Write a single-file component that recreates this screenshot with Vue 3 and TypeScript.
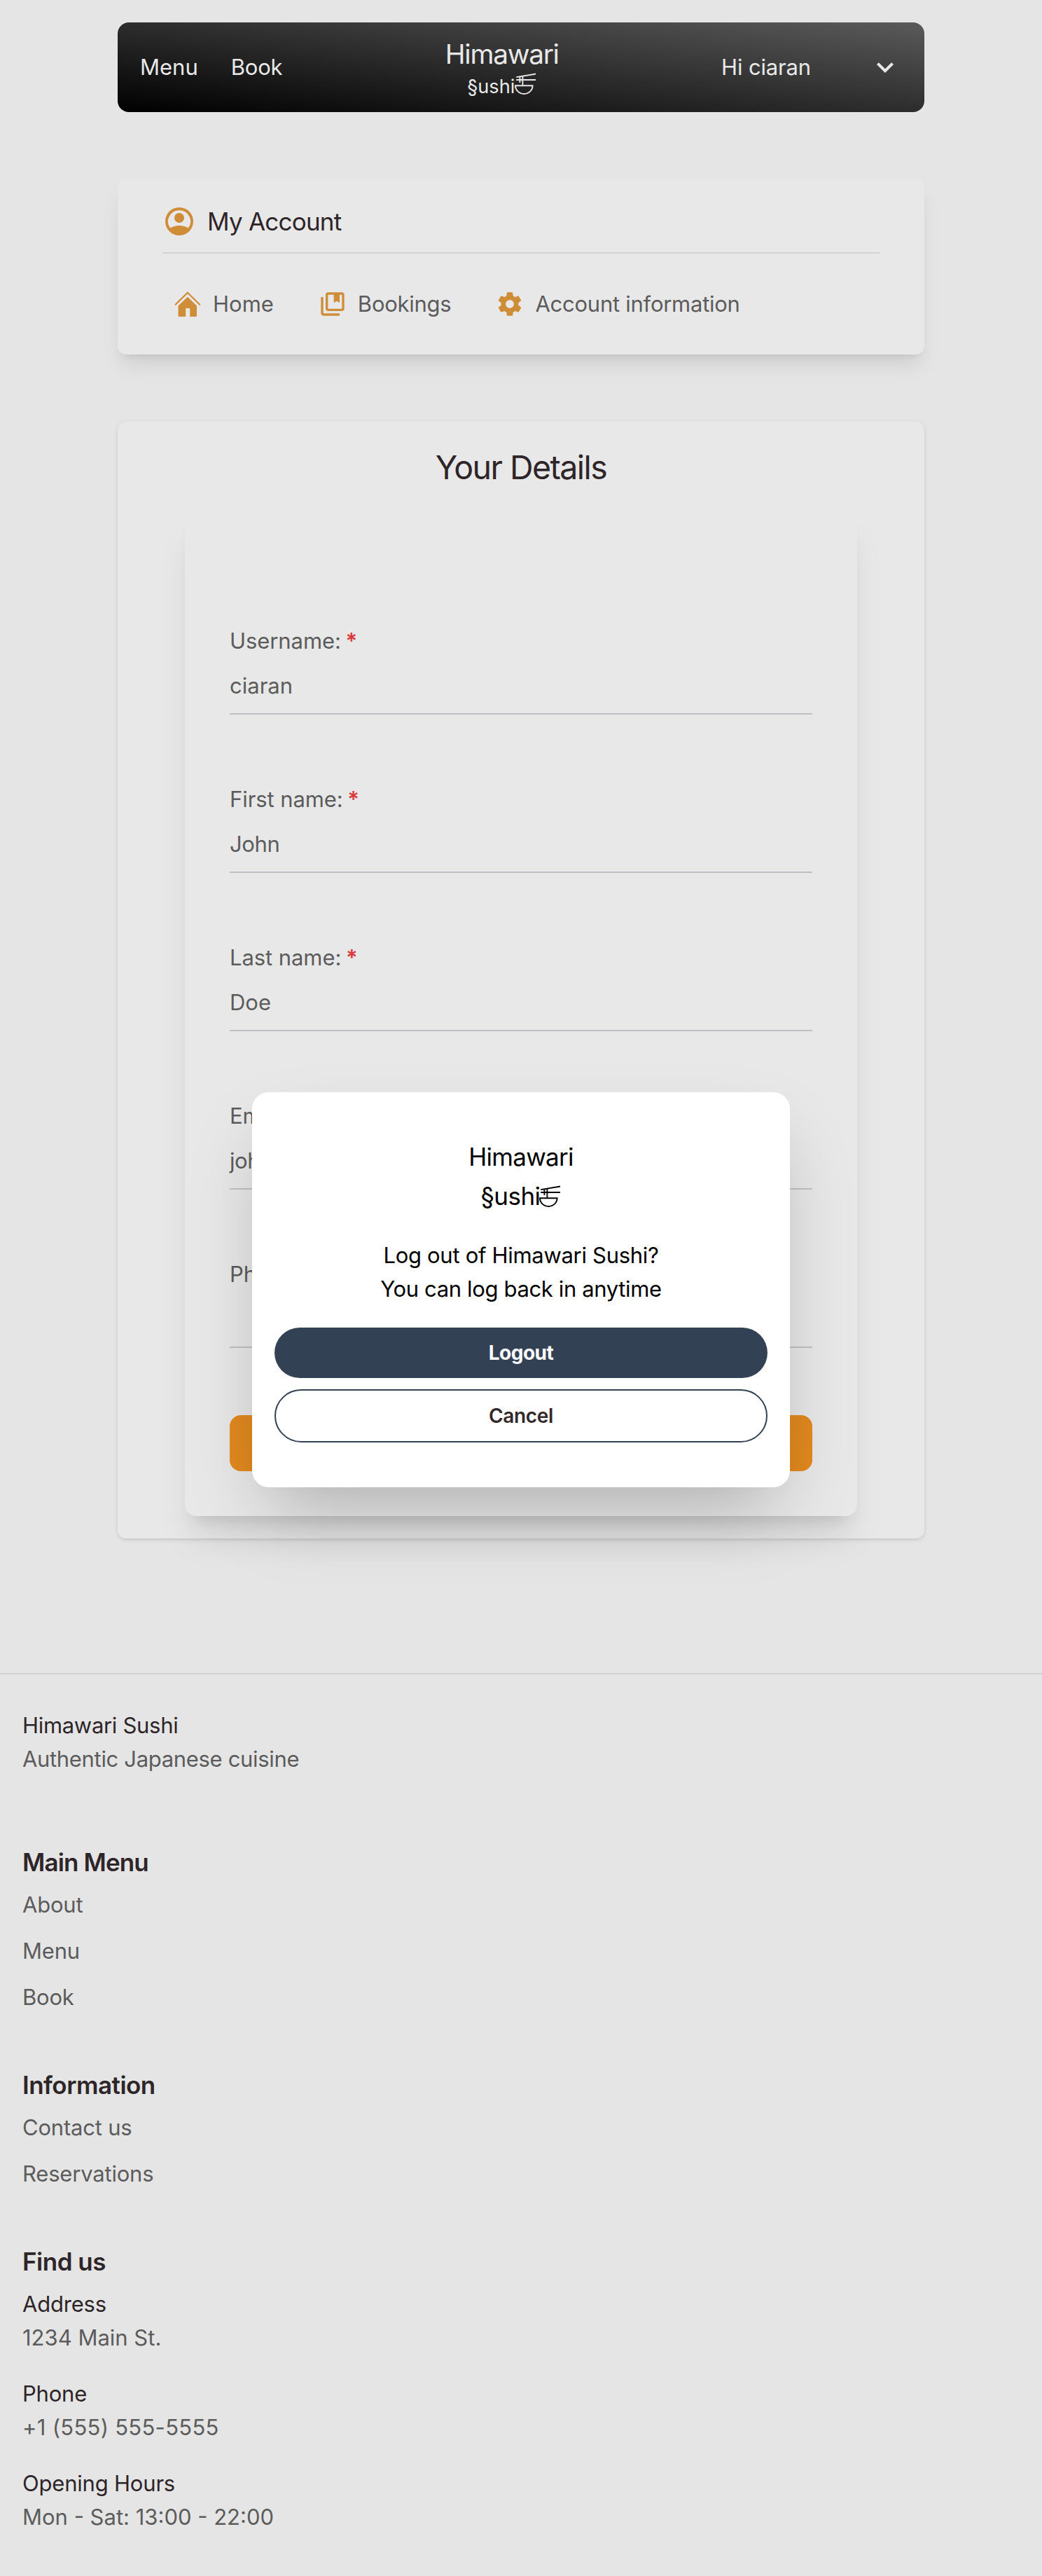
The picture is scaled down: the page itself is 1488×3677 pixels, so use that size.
<script setup lang="ts">
import { ref } from 'vue'

interface Field {
  id: string
  label: string
  value: string
}

const fields = ref<Field[]>([
  { id: 'username', label: 'Username:', value: 'ciaran' },
  { id: 'first-name', label: 'First name:', value: 'John' },
  { id: 'last-name', label: 'Last name:', value: 'Doe' },
  { id: 'email', label: 'Email:', value: 'johndoe@gmail.com' },
  { id: 'phone', label: 'Phone:', value: '' },
])

const mainMenu: string[] = ['About', 'Menu', 'Book']
const information: string[] = ['Contact us', 'Reservations']
const contact: { term: string; detail: string; kind: string }[] = [
  { term: 'Address', detail: '1234 Main St.', kind: 'digits' },
  { term: 'Phone', detail: '+1 (555) 555-5555', kind: 'phone' },
  { term: 'Opening Hours', detail: 'Mon - Sat: 13:00 - 22:00', kind: 'digits' },
]

const modalOpen = ref(true)
</script>

<template>
  <div class="page">
    <header class="topbar">
      <nav class="topnav">
        <a class="plain">Menu</a>
        <a>Book</a>
      </nav>
      <div class="brand">
        <span class="brand-name">Himawari</span>
        <span class="brand-sub">
          <span>§ushi</span>
          <svg class="bowl" viewBox="0 0 32 32" width="32" height="32">
            <path d="M3.2 6.1 31 1.5M3.2 10H31M8.4 5v9M12.4 4.4v13.4" />
            <path d="M2 18.3H26.6C26.6 25 21 30 14.3 30S2 25 2 18.3z" />
          </svg>
        </span>
      </div>
      <div class="user">
        <span>Hi ciaran</span>
        <svg viewBox="0 0 24 24" width="48" height="48" fill="currentColor">
          <path d="M16.59 8.59 12 13.17 7.41 8.59 6 10l6 6 6-6z" />
        </svg>
      </div>
    </header>

    <section class="account">
      <h2 class="account-title">
        <svg viewBox="0 0 24 24" width="48" height="48">
          <path
            fill-rule="evenodd"
            d="M12 2a10 10 0 1 0 0 20 10 10 0 0 0 0-20zm0 2.1a7.9 7.9 0 0 0-6.4 12.7C7.4 15.6 9.6 15 12 15s4.6.6 6.4 1.8A7.9 7.9 0 0 0 12 4.1z"
          />
          <circle cx="12" cy="9.5" r="3.5" />
        </svg>
        <span>My Account</span>
      </h2>
      <nav class="account-nav">
        <a>
          <svg viewBox="0 0 40 40" width="40" height="40">
            <path d="M2.6 20.7 19.9 3.7 37.2 20.7" class="roof" />
            <path
              d="M19.9 9.7 33 22.5V36.5q0 1.500-1.500 1.500H23.2V26.8q0-.8-.8-.8H18q-.8 0-.8.8V38H8q-1.500 0-1.500-1.500V22.5z"
            />
          </svg>
          <span class="plain">Home</span>
        </a>
        <a>
          <svg viewBox="0 0 24 24" width="40" height="40">
            <path d="M4 6H2v14c0 1.1.9 2 2 2h14v-2H4V6z" />
            <path
              fill-rule="evenodd"
              d="M20 2H8c-1.1 0-2 .9-2 2v12c0 1.1.9 2 2 2h12c1.1 0 2-.9 2-2V4c0-1.1-.9-2-2-2zm0 14H8V4h5v7l2.5-1.5L18 11V4h2v12z"
            />
          </svg>
          <span>Bookings</span>
        </a>
        <a>
          <svg viewBox="0 0 24 24" width="40" height="40">
            <path
              d="M19.43 12.98c.04-.32.07-.64.07-.98s-.03-.66-.07-.98l2.11-1.65c.19-.15.24-.42.12-.64l-2-3.46c-.12-.22-.39-.3-.61-.22l-2.49 1c-.52-.4-1.08-.73-1.69-.98l-.38-2.65C14.46 2.18 14.25 2 14 2h-4c-.25 0-.46.18-.49.42l-.38 2.65c-.61.25-1.17.59-1.69.98l-2.49-1c-.23-.09-.49 0-.61.22l-2 3.46c-.13.22-.07.49.12.64l2.11 1.65c-.04.32-.07.65-.07.98s.03.66.07.98l-2.11 1.65c-.19.15-.24.42-.12.64l2 3.46c.12.22.39.3.61.22l2.49-1c.52.4 1.08.73 1.69.98l.38 2.65c.03.24.24.42.49.42h4c.25 0 .46-.18.49-.42l.38-2.65c.61-.25 1.17-.59 1.69-.98l2.49 1c.23.09.49 0 .61-.22l2-3.46c.12-.22.07-.49-.12-.64l-2.11-1.65zM12 15.5c-1.93 0-3.5-1.57-3.5-3.5s1.57-3.5 3.5-3.5 3.5 1.57 3.5 3.5-1.57 3.5-3.5 3.5z"
            />
          </svg>
          <span>Account information</span>
        </a>
      </nav>
    </section>

    <section class="details">
      <h1>Your Details</h1>
      <form class="form" @submit.prevent>
        <div v-for="field in fields" :key="field.id" class="field">
          <div class="label">{{ field.label }} <b v-if="field.id !== 'phone'">*</b></div>
          <div class="value" :class="field.id">{{ field.value }}</div>
        </div>
        <button class="save" type="submit" aria-label="Update"></button>
      </form>
    </section>

    <footer class="footer">
      <div class="about">
        <p class="strong">Himawari Sushi</p>
        <p class="tight">Authentic Japanese cuisine</p>
      </div>
      <div class="group menu-group">
        <h3 class="h-menu">Main Menu</h3>
        <ul>
          <li v-for="item in mainMenu" :key="item">{{ item }}</li>
        </ul>
      </div>
      <div class="group info-group">
        <h3>Information</h3>
        <ul>
          <li v-for="item in information" :key="item">{{ item }}</li>
        </ul>
      </div>
      <div class="group find-group">
        <h3>Find us</h3>
        <dl>
          <div v-for="row in contact" :key="row.term">
            <dt>{{ row.term }}</dt>
            <dd :class="row.kind">{{ row.detail }}</dd>
          </div>
        </dl>
      </div>
    </footer>

    <div v-if="modalOpen" class="overlay">
      <div class="modal" role="dialog" aria-modal="true">
        <div class="modal-name">Himawari</div>
        <div class="modal-sub">
          <span>§ushi</span>
          <svg class="bowl" viewBox="0 0 32 32" width="32" height="32">
            <path d="M3.2 6.1 31 1.5M3.2 10H31M8.4 5v9M12.4 4.4v13.4" />
            <path d="M2 18.3H26.6C26.6 25 21 30 14.3 30S2 25 2 18.3z" />
          </svg>
        </div>
        <p class="modal-text">
          Log out of Himawari Sushi?<br /><span>You can log back in anytime</span>
        </p>
        <button class="btn logout" type="button">Logout</button>
        <button class="btn cancel" type="button" @click="modalOpen = false">Cancel</button>
      </div>
    </div>
  </div>
</template>

<style>
html,
body {
  margin: 0;
  background: #e5e5e5;
}
</style>

<style scoped>
.page {
  position: relative;
  box-sizing: border-box;
  width: 100%;
  height: 3677px;
  padding-top: 32px;
  overflow: hidden;
  background: #e5e5e5;
  color: #5c5c5c;
  font-family: Inter, "Liberation Sans", sans-serif;
  font-size: 31px;
  line-height: 48px;
  letter-spacing: -0.2px;
}

h1,
h2,
h3,
p,
ul,
dl,
dd {
  margin: 0;
  padding: 0;
  font-weight: 400;
}

ul {
  list-style: none;
}

.topbar {
  box-sizing: border-box;
  display: flex;
  align-items: center;
  justify-content: space-between;
  width: 1152px;
  height: 128px;
  margin: 0 auto;
  padding: 0 32px;
  border-radius: 16px;
  background: linear-gradient(to top right, #000, #5a5a5a);
  color: #e8e8e8;
}

.topnav {
  display: flex;
  gap: 47px;
}

.plain {
  letter-spacing: 0;
}

.brand {
  display: flex;
  flex-direction: column;
  align-items: center;
  height: 96px;
}

.brand-name {
  font-size: 38.8px;
  line-height: 58px;
  letter-spacing: -1.27px;
}

.brand-sub {
  display: flex;
  font-size: 27.2px;
  line-height: 36px;
  letter-spacing: 0;
}

.bowl {
  display: block;
  fill: none;
  stroke: currentColor;
  stroke-width: 1.9;
}

.brand-sub .bowl {
  margin: -2px 0 0 -1px;
}

.user {
  display: flex;
  align-items: center;
  gap: 82px;
  letter-spacing: -0.15px;
}

.account {
  box-sizing: border-box;
  width: 1152px;
  height: 250px;
  margin: 96px auto 0;
  padding: 32px 64px 48px;
  border-radius: 12px;
  background: #e8e8e8;
  box-shadow:
    0 20px 30px -6px rgba(0, 0, 0, 0.1),
    0 8px 12px -8px rgba(0, 0, 0, 0.1);
}

.account svg {
  flex: none;
  fill: #cf8d38;
}

.account svg .roof {
  fill: none;
  stroke: #cf8d38;
  stroke-width: 2.2;
  stroke-linecap: round;
}

.account-title {
  display: flex;
  align-items: center;
  gap: 16px;
  padding-bottom: 16px;
  border-bottom: 2px solid #d2d2d4;
  color: #2e2529;
  font-size: 35px;
  line-height: 56px;
  letter-spacing: -0.79px;
}

.account-nav {
  display: flex;
  gap: 64px;
  padding: 48px 16px 0;
  letter-spacing: -0.26px;
}

.account-nav a {
  display: flex;
  align-items: center;
  gap: 16px;
}

.details {
  box-sizing: border-box;
  width: 1152px;
  margin: 96px auto 0;
  padding: 32px 96px;
  border-radius: 12px;
  background: #e8e8e8;
  box-shadow:
    0 2px 6px rgba(0, 0, 0, 0.1),
    0 2px 4px -2px rgba(0, 0, 0, 0.1);
}

.details h1 {
  margin-bottom: 28px;
  color: #2e2529;
  font-size: 46.5px;
  line-height: 66px;
  letter-spacing: -1.57px;
  text-align: center;
}

.form {
  display: flex;
  flex-direction: column;
  gap: 96px;
  padding: 162px 64px 64px;
  border-radius: 16px;
  background: #e8e8e8;
  box-shadow:
    0 40px 50px -10px rgba(0, 0, 0, 0.1),
    0 16px 20px -12px rgba(0, 0, 0, 0.1);
}

.field {
  border-bottom: 2px solid #bfc0c5;
}

.label {
  height: 50px;
  margin-bottom: 14px;
  line-height: 50px;
  letter-spacing: -0.08px;
}

.label b {
  margin-left: -2px;
  color: #d93b3d;
  font-weight: 600;
}

.value {
  height: 50px;
  padding-bottom: 14px;
  line-height: 50px;
  letter-spacing: 0;
}

.value.first-name,
.value.email {
  letter-spacing: -0.4px;
}

.save {
  height: 80px;
  padding: 0;
  border: 0;
  border-radius: 16px;
  background: #e28a1f;
}

.footer {
  margin-top: 192px;
  padding: 49px 32px 0;
  border-top: 2px solid #d1d1d3;
}

.strong {
  color: #2e2529;
  letter-spacing: -0.31px;
}

.tight {
  letter-spacing: -0.33px;
}

.menu-group {
  margin-top: 95px;
}

.info-group,
.find-group {
  margin-top: 73px;
}

.group h3 {
  margin-bottom: 9px;
  color: #2e2529;
  font-size: 35px;
  font-weight: 600;
  line-height: 56px;
  letter-spacing: -0.5px;
}

.group .h-menu {
  letter-spacing: -0.85px;
}

.group ul,
.group dl {
  display: flex;
  flex-direction: column;
}

.group ul {
  gap: 18px;
}

.group dl {
  gap: 32px;
}

.group dt {
  color: #2e2529;
}

.group dd.digits {
  letter-spacing: 0;
}

.group dd.phone {
  letter-spacing: 0.28px;
}

.overlay {
  position: absolute;
  inset: 0;
  display: flex;
  align-items: center;
  justify-content: center;
  padding-top: 5px;
}

.modal {
  box-sizing: border-box;
  display: flex;
  flex-direction: column;
  width: 768px;
  height: 564px;
  padding: 64px 32px;
  border-radius: 24px;
  background: #fff;
  box-shadow: 0 50px 100px -24px rgba(0, 0, 0, 0.25);
  color: #000;
  text-align: center;
}

.modal-name {
  font-size: 35px;
  line-height: 56px;
  letter-spacing: -0.73px;
}

.modal-sub {
  display: flex;
  justify-content: center;
  height: 56px;
  font-size: 35px;
  line-height: 56px;
  letter-spacing: -0.57px;
}

.modal-sub .bowl {
  margin: 13px 0 0 -2px;
}

.modal-text {
  margin: 33px 0 31px;
  letter-spacing: -0.3px;
}

.modal-text span {
  letter-spacing: -0.36px;
}

.btn {
  box-sizing: border-box;
  width: 100%;
  padding: 0;
  border-radius: 9999px;
  font-family: inherit;
  font-size: 28px;
  line-height: 40px;
}

.logout {
  height: 72px;
  flex: none;
  border: 0;
  background: #334155;
  color: #fff;
  font-weight: 700;
  letter-spacing: -0.48px;
}

.cancel {
  height: 76px;
  flex: none;
  margin-top: 16px;
  border: 2px solid #334155;
  background: #fff;
  color: #33282c;
  font-weight: 600;
  letter-spacing: -0.34px;
}
</style>
